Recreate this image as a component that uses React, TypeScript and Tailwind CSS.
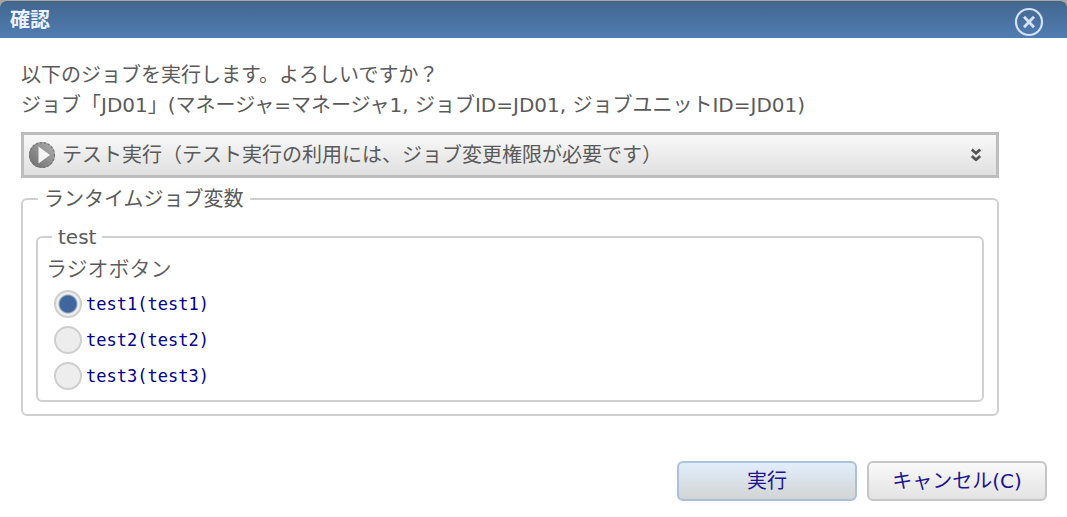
import { useState } from "react"

const options = ["test1", "test2", "test3"]

function CloseIcon() {
  return (
    <svg viewBox="0 0 30 30" className="size-[30px]" fill="none" stroke="#d3e2f3" aria-hidden="true">
      <circle cx="15" cy="15" r="13" strokeWidth="2.2" />
      <path d="M10 9.8 L20 20.2 M20 9.8 L10 20.2" strokeWidth="2.8" />
    </svg>
  )
}

function PlayIcon() {
  return (
    <svg viewBox="0 0 28 28" className="size-7 shrink-0" aria-hidden="true">
      <defs>
        <linearGradient id="disc" x1="0" y1="1" x2="1" y2="0">
          <stop offset="0" stopColor="#6c6c6c" />
          <stop offset="1" stopColor="#b0b0b0" />
        </linearGradient>
      </defs>
      <circle cx="14" cy="14" r="13" fill="url(#disc)" />
      <circle cx="14" cy="14" r="12.4" fill="none" stroke="#777" strokeWidth="1.4" strokeDasharray="2 2" />
      <path d="M10.5 5.5 L22 14 L10.5 22.5 Z" fill="#f4f4f4" />
    </svg>
  )
}

function ChevronsIcon() {
  return (
    <svg viewBox="0 0 10 14" className="w-[10px] h-[14px] shrink-0" fill="none" stroke="#555" strokeWidth="2.8" aria-hidden="true">
      <path d="M0.8 1.5 L5 5.2 L9.2 1.5 M0.8 8 L5 11.7 L9.2 8" />
    </svg>
  )
}

export default function App() {
  const [selected, setSelected] = useState("test1")

  return (
    <div className="bg-[#a9a49d] pt-px font-['DejaVu_Sans','Noto_Sans_CJK_JP',sans-serif] text-[20px] leading-[30px] text-[#5a5a5a]">
      <section role="dialog" aria-labelledby="title" className="rounded-t-md bg-white overflow-hidden">
        <header className="flex items-center justify-between pl-2.5 pr-[23px] h-[37px] bg-linear-to-b from-[#42668f] to-[#507db2]">
          <h1 id="title" className="font-bold text-[#eaf2fb]">確認</h1>
          <button type="button" aria-label="閉じる" className="mt-1">
            <CloseIcon />
          </button>
        </header>

        <div className="pt-[22px] pb-4 pl-[21px] pr-5">
          <div className="mr-12">
            <p>以下のジョブを実行します。よろしいですか？</p>
            <p>ジョブ「JD01」(マネージャ=マネージャ1, ジョブID=JD01, ジョブユニットID=JD01)</p>

            <button
              type="button"
              aria-expanded="false"
              className="mt-3 flex h-[46px] w-full items-center gap-1.5 border-3 border-[#bdbdbd] bg-linear-to-b from-[#f8f8f8] to-[#e0e0e0] pl-1 pr-[15px] text-left"
            >
              <PlayIcon />
              <span className="flex-1">テスト実行（テスト実行の利用には、ジョブ変更権限が必要です）</span>
              <ChevronsIcon />
            </button>

            {/* 変数 */}
            <fieldset className="mt-1.5 rounded-md border-2 border-[#d0d0d0] px-[13px] pb-3">
              <legend className="ml-0.5 px-1.5">ランタイムジョブ変数</legend>
              <fieldset className="mt-2 rounded-md border-2 border-[#d0d0d0] px-2 pb-1.5">
                <legend className="ml-1.5 px-1.5">test</legend>
                <p className="font-['Noto_Sans_CJK_JP',sans-serif] text-[21px] font-[350]">ラジオボタン</p>
                <div className="mt-1 pl-2">
                  {options.map((name) => (
                    <label
                      key={name}
                      className="flex h-9 items-center gap-1 font-['DejaVu_Sans_Mono',monospace] text-[17px] text-[#00008b]"
                    >
                      <input
                        type="radio"
                        name="variable"
                        value={name}
                        checked={selected === name}
                        onChange={() => setSelected(name)}
                        className="size-7 appearance-none rounded-full border-2 border-[#cfcfcf] bg-[#ededed] checked:bg-[radial-gradient(circle,#40669b_8px,#ededed_10px)]"
                      />
                      {name}({name})
                    </label>
                  ))}
                </div>
              </fieldset>
            </fieldset>
          </div>

          <div className="mt-[45px] flex justify-end gap-2.5 text-[#1c1591]">
            <button
              type="button"
              className="h-10 w-[180px] rounded-md border-2 border-[#a9c1de] bg-linear-to-b from-[#e2eefc] to-[#d2d4d4]"
            >
              実行
            </button>
            <button
              type="button"
              className="h-10 w-[180px] rounded-md border-2 border-[#c6c6c6] bg-linear-to-b from-[#f9f9f9] to-[#e3e3e3]"
            >
              キャンセル(C)
            </button>
          </div>
        </div>
      </section>
    </div>
  )
}
